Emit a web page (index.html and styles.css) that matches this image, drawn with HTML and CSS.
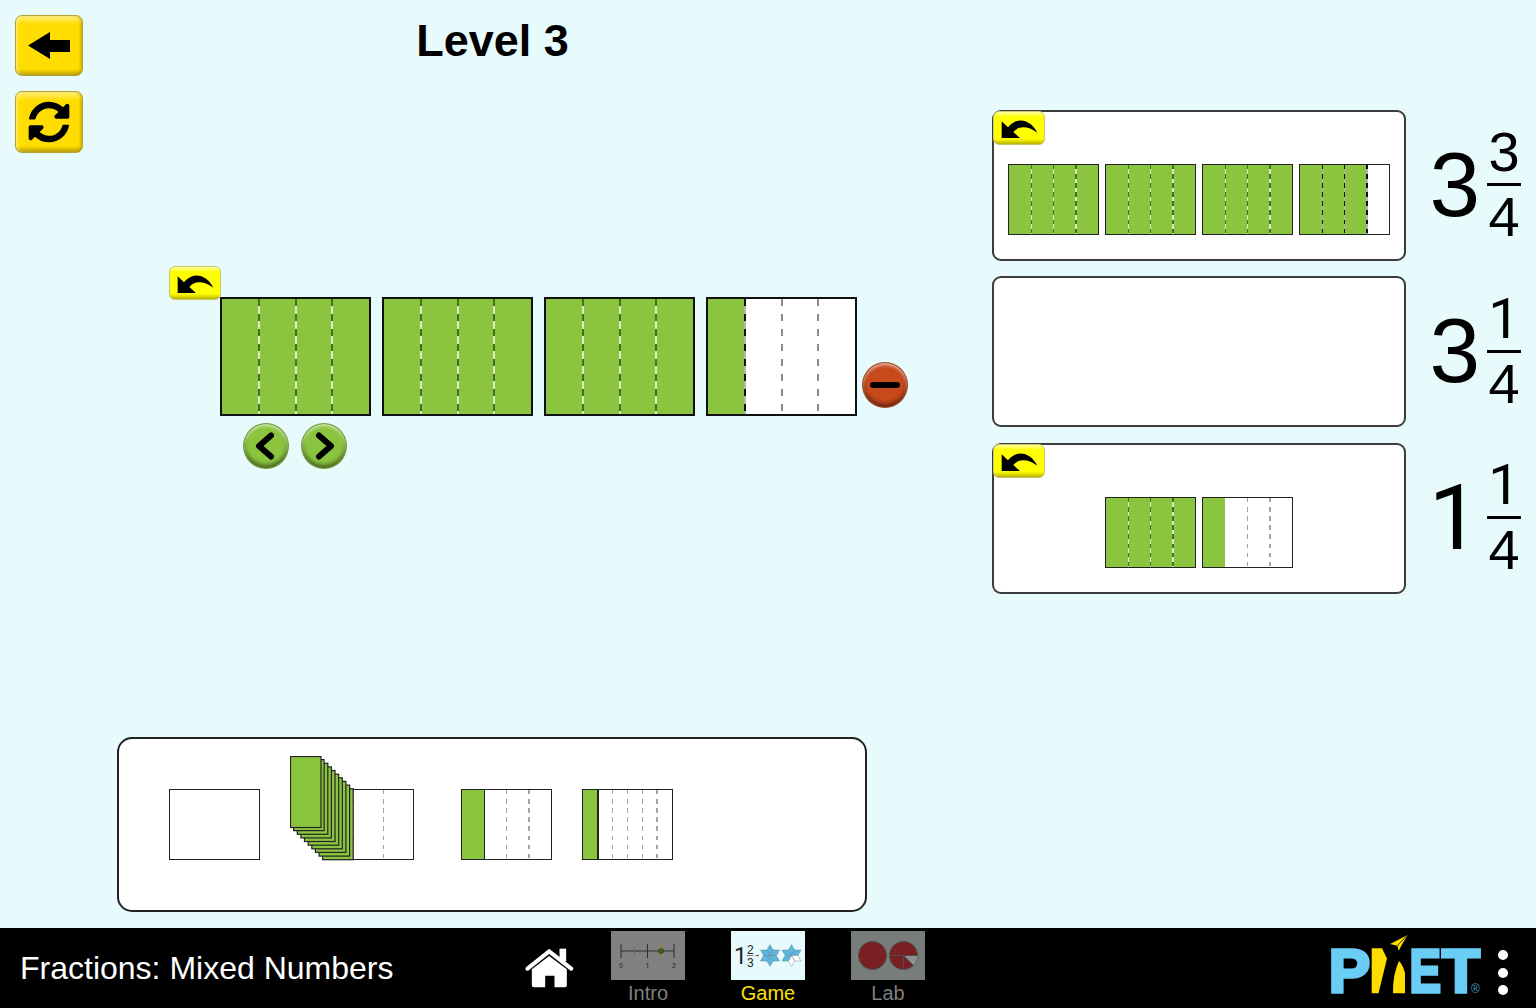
FILE: index.html
```html
<!DOCTYPE html>
<html lang="en">
  <head>
    <meta charset="UTF-8" />
    <meta name="viewport" content="width=device-width, initial-scale=1.0" />
    <title>Fractions: Mixed Numbers</title>
    <link rel="stylesheet" href="styles.css">
  </head>
  <body>
    <main class="sim">
      <!-- back + refresh -->
      <div class="tools">
        <button class="tool-btn tool-back">
          <svg width="42" height="27" viewBox="0 0 42 27"><path d="M0 13.5 22 0V8H42V20H22V27Z" /></svg>
        </button>
        <button class="tool-btn tool-refresh">
          <svg width="42" height="42" viewBox="0 0 512 512"><path d="M370.72 133.28C339.458 104.008 298.888 87.962 255.848 88c-77.458.068-144.328 53.178-162.791 126.85-1.344 5.363-6.122 9.15-11.651 9.15H24.103c-7.498 0-13.194-6.807-11.807-14.176C33.933 94.924 134.813 8 256 8c66.448 0 126.791 26.136 171.315 68.685L463.03 40.97C478.149 25.851 504 36.559 504 57.941V192c0 13.255-10.745 24-24 24H345.941c-21.382 0-32.09-25.851-16.971-40.971l41.75-41.749zM32 296h134.059c21.382 0 32.09 25.851 16.971 40.971l-41.75 41.75c31.262 29.273 71.835 45.319 114.876 45.28 77.418-.07 144.315-53.144 162.787-126.849 1.344-5.363 6.122-9.15 11.651-9.15h57.304c7.498 0 13.194 6.807 11.807 14.176C478.067 417.076 377.187 504 256 504c-66.448 0-126.791-26.136-171.315-68.685L48.97 471.03C33.851 486.149 8 475.441 8 454.059V320c0-13.255 10.745-24 24-24z" /></svg>
        </button>
      </div>

      <!-- title, builder, tray -->
      <div class="work">
        <h1 class="level-title">Level 3</h1>

        <div class="builder">
          <button class="undo-btn builder-undo">
            <svg width="51" height="34" viewBox="0 0 153 102"><path d="M23 28V78H78L58 60C72 42 100 40 130 62 112 24 70 10 42 46Z" /></svg>
          </button>
          <div class="builder-row">
            <div class="bar"><span class="cell on"></span><span class="cell on"></span><span class="cell on"></span><span class="cell on"></span></div>
            <div class="bar"><span class="cell on"></span><span class="cell on"></span><span class="cell on"></span><span class="cell on"></span></div>
            <div class="bar"><span class="cell on"></span><span class="cell on"></span><span class="cell on"></span><span class="cell on"></span></div>
            <div class="bar"><span class="cell on"></span><span class="cell mark"></span><span class="cell"></span><span class="cell"></span></div>
            <button class="round-btn round-minus">
              <svg width="46" height="46" viewBox="0 0 46 46"><line x1="11" y1="23" x2="35" y2="23" /></svg>
            </button>
          </div>
          <div class="builder-nav">
            <button class="round-btn round-green">
              <svg width="46" height="46" viewBox="0 0 46 46"><polyline points="28,12.5 16,23 28,33.5" /></svg>
            </button>
            <button class="round-btn round-green">
              <svg width="46" height="46" viewBox="0 0 46 46"><polyline points="18,12.5 30,23 18,33.5" /></svg>
            </button>
          </div>
        </div>

        <div class="tray">
          <div class="bar mini tray-first"><span class="cell"></span></div>
          <div class="bar mini tray-stack">
            <span class="cell"></span><span class="cell"></span><span class="cell"></span>
            <svg class="stack" width="64" height="105" viewBox="0 0 64 105">
              <rect x="32.7" y="32.7" width="30.5" height="71" />
              <rect x="29.1" y="29.1" width="30.5" height="71" />
              <rect x="25.4" y="25.4" width="30.5" height="71" />
              <rect x="21.8" y="21.8" width="30.5" height="71" />
              <rect x="18.2" y="18.2" width="30.5" height="71" />
              <rect x="14.5" y="14.5" width="30.5" height="71" />
              <rect x="10.9" y="10.9" width="30.5" height="71" />
              <rect x="7.3" y="7.3" width="30.5" height="71" />
              <rect x="3.6" y="3.6" width="30.5" height="71" />
              <rect x="0.5" y="0.5" width="30.5" height="71" />
            </svg>
          </div>
          <div class="bar mini tray-quarters"><span class="cell on"></span><span class="cell solid"></span><span class="cell"></span><span class="cell"></span></div>
          <div class="bar mini tray-sixths"><span class="cell on"></span><span class="cell solid"></span><span class="cell"></span><span class="cell"></span><span class="cell"></span><span class="cell"></span></div>
        </div>
      </div>

      <!-- target cards -->
      <div class="targets">
        <div class="target">
          <div class="card">
            <button class="undo-btn card-undo">
              <svg width="51" height="34" viewBox="0 0 153 102"><path d="M23 28V78H78L58 60C72 42 100 40 130 62 112 24 70 10 42 46Z" /></svg>
            </button>
            <div class="bar mini"><span class="cell on"></span><span class="cell on"></span><span class="cell on"></span><span class="cell on"></span></div>
            <div class="bar mini"><span class="cell on"></span><span class="cell on"></span><span class="cell on"></span><span class="cell on"></span></div>
            <div class="bar mini"><span class="cell on"></span><span class="cell on"></span><span class="cell on"></span><span class="cell on"></span></div>
            <div class="bar mini"><span class="cell on"></span><span class="cell on mark"></span><span class="cell on mark"></span><span class="cell mark"></span></div>
          </div>
          <div class="mixed"><span class="whole">3</span><span class="frac"><span>3</span><span class="frac-den">4</span></span></div>
        </div>
        <div class="target">
          <div class="card"></div>
          <div class="mixed"><span class="whole">3</span><span class="frac"><span class="one">1</span><span class="frac-den">4</span></span></div>
        </div>
        <div class="target">
          <div class="card">
            <button class="undo-btn card-undo">
              <svg width="51" height="34" viewBox="0 0 153 102"><path d="M23 28V78H78L58 60C72 42 100 40 130 62 112 24 70 10 42 46Z" /></svg>
            </button>
            <div class="bar mini"><span class="cell on"></span><span class="cell on"></span><span class="cell on"></span><span class="cell on"></span></div>
            <div class="bar mini"><span class="cell on"></span><span class="cell no-line"></span><span class="cell"></span><span class="cell"></span></div>
          </div>
          <div class="mixed"><span class="whole one">1</span><span class="frac"><span class="one">1</span><span class="frac-den">4</span></span></div>
        </div>
      </div>
    </main>

    <footer class="navbar">
      <div class="nav-title">Fractions: Mixed Numbers</div>
      <svg class="nav-home" width="49" height="40" viewBox="45 60 146 120">
        <rect x="148" y="62" width="20" height="38" />
        <path d="M65 124 117 84 170 124V172Q170 178 164 178H133V143H105V178H71Q65 178 65 172Z" />
        <polyline points="52,122 117,70 183,122" />
      </svg>
      <div class="tabs">
        <div class="tab">
          <svg class="tab-icon" width="74" height="49" viewBox="0 0 74 49">
            <rect width="74" height="49" fill="#808080" />
            <path d="M10 20H63M10 13V27M36.5 13V27M63 13V27" stroke="#2e2e2e" stroke-width="1" fill="none" />
            <path d="M23.5 16V24" stroke="#6a6a6a" stroke-width="1" />
            <path d="M50 14V26" stroke="#8f8a2a" stroke-width="2" />
            <circle cx="50" cy="20" r="2.6" fill="#3f6318" stroke="#2e2e2e" stroke-width=".6" />
            <text class="tick-label" x="10" y="37">0</text>
            <text class="tick-label one" x="36.5" y="37">1</text>
            <text class="tick-label" x="63" y="37">2</text>
          </svg>
          <span class="tab-label">Intro</span>
        </div>
        <div class="tab tab-active">
          <svg class="tab-icon" width="74" height="49" viewBox="0 0 74 49">
            <defs>
              <polygon id="rhomb" points="0,0 -3.18,-5.5 0,-11 3.18,-5.5" stroke="#5f7f8f" stroke-width=".4" />
            </defs>
            <rect width="74" height="49" fill="#e7fbfc" />
            <text class="icon-whole one" x="3" y="33">1</text>
            <text class="icon-frac" x="16" y="22.5">2</text>
            <path d="M15.5 24.5H22.5" stroke="#777" stroke-width="1" />
            <text class="icon-frac" x="16" y="35.5">3</text>
            <path d="M24.5 24.5H28" stroke="#777" stroke-width="1.5" />
            <g fill="#5db7de" transform="translate(39 24.5)">
              <use href="#rhomb" /><use href="#rhomb" transform="rotate(60)" /><use href="#rhomb" transform="rotate(120)" />
              <use href="#rhomb" transform="rotate(180)" /><use href="#rhomb" transform="rotate(240)" /><use href="#rhomb" transform="rotate(300)" />
            </g>
            <g fill="#5db7de" transform="translate(60.5 24.5)">
              <use href="#rhomb" /><use href="#rhomb" transform="rotate(60)" />
              <use href="#rhomb" transform="rotate(120)" fill="#fff" /><use href="#rhomb" transform="rotate(180)" fill="#fff" />
              <use href="#rhomb" transform="rotate(240)" /><use href="#rhomb" transform="rotate(300)" />
            </g>
          </svg>
          <span class="tab-label">Game</span>
        </div>
        <div class="tab">
          <svg class="tab-icon" width="74" height="49" viewBox="0 0 74 49">
            <rect width="74" height="49" fill="#767d7b" />
            <circle cx="21.5" cy="24.5" r="14" fill="#7b2022" stroke="#4d4d4d" />
            <circle cx="52.5" cy="24.5" r="14" fill="#7b2022" stroke="#4d4d4d" />
            <path d="M52.5 24.5H66.5A14 14 0 0 1 62.4 34.4Z" fill="#8f8f8f" />
            <path d="M38.5 24.5H66.5M52.5 24.5V38.5M52.5 24.5 62.4 34.4" stroke="#4d4d4d" fill="none" />
          </svg>
          <span class="tab-label">Lab</span>
        </div>
      </div>
      <svg class="phet-logo" width="154" height="72" viewBox="-3 0 154 72">
        <text class="phet-letter" x="-2.3" y="57">P</text>
        <text class="phet-letter" x="78.5" y="57" textLength="31.5" lengthAdjust="spacingAndGlyphs">E</text>
        <text class="phet-letter" x="111" y="57">T</text>
        <path class="phet-h" d="M40.7 13.3H51L56 23.5 47.5 58.3H40.7ZM68 26Q72 30 74 38V58.3H62Q61.5 40 68 26Z" />
        <path class="phet-h" d="M76.7 0 59 9 66.3 10.7 67.7 15.7 70.7 10Z" />
        <path class="phet-fold" d="M76.7 0 66.3 10.7" />
        <text class="phet-reg" x="140" y="58">®</text>
      </svg>
      <div class="nav-dots"><span></span><span></span><span></span></div>
    </footer>
  </body>
</html>
```

FILE: styles.css
```css
* {
  box-sizing: border-box;
}

body {
  margin: 0;
  width: 1536px;
  height: 1008px;
  overflow: hidden;
  font-family: "Liberation Sans", Arial, sans-serif;
  background-color: #e7fbfc;
}

button {
  padding: 0;
  font: inherit;
  cursor: pointer;
}

svg {
  display: block;
}

/* the footless 1 */
.one {
  font-family: Roboto, "Liberation Sans", sans-serif;
}

.sim {
  display: grid;
  grid-template-columns: 118px 874px 1fr;
  height: 928px;
}

/* yellow tools */
.tools {
  display: flex;
  flex-direction: column;
  gap: 15px;
  padding: 15px 0 0 15px;
}
.tool-btn {
  display: flex;
  align-items: center;
  justify-content: center;
  width: 68px;
  height: 61px;
  background: linear-gradient(to bottom, #fff07a 0, #ffdd00 14%, #ffdd00 90%, #b9a000 100%);
  border: 1px solid #b5a02c;
  border-radius: 7px;
  box-shadow: inset 2px 0 2px rgba(255, 255, 255, 0.35), inset -2px 0 2px rgba(120, 100, 0, 0.3);
}
.tool-refresh {
  height: 62px;
}

.work {
  display: flex;
  flex-direction: column;
  padding-bottom: 16px;
}

.level-title {
  width: 749px;
  margin: 0;
  padding-top: 15px;
  font-size: 45px;
  line-height: 52px;
  font-weight: bold;
  text-align: center;
  color: #000;
}

/* big fraction builder */
.builder {
  position: relative;
  margin: 230px 0 0 102px;
}
.builder-row {
  display: flex;
  gap: 11px;
}
.builder-nav {
  display: flex;
  gap: 12px;
  margin: 7px 0 0 23px;
}
.builder-undo {
  position: absolute;
  left: -51px;
  top: -31px;
}

.undo-btn {
  width: 52px;
  height: 34px;
  background: linear-gradient(to bottom, #ffff99 0, #ffff00 16%, #ffff00 84%, #b8b300 100%);
  border: 1px solid #c9c66a;
  border-radius: 6px;
}

.round-btn {
  flex: none;
  width: 46px;
  height: 46px;
  border-radius: 50%;
  border: 1px solid rgba(70, 70, 40, 0.35);
  box-shadow: inset 0 2px 3px rgba(255, 255, 255, 0.6), inset 0 -3px 4px rgba(0, 0, 0, 0.5);
}
.round-btn svg {
  margin: -1px;
}
.round-green {
  background-color: #8bc53f;
}
.round-green polyline {
  fill: none;
  stroke: #000;
  stroke-width: 6;
  stroke-linecap: round;
  stroke-linejoin: round;
}
.round-minus {
  margin: 65px 0 0 -6px;
  background-color: #c8491c;
}
.round-minus line {
  stroke: #000;
  stroke-width: 6;
  stroke-linecap: round;
}

/* fraction bars */
.bar {
  flex: none;
  display: flex;
  width: 151px;
  height: 119px;
  background-color: #fff;
  border: 2px solid #111;
}
.cell {
  --dash: 7px;
  --period: 15px;
  --line: 2px;
  --dark: #8a8a8a;
  --light: transparent;
  position: relative;
  flex: 1;
}
.cell:not(:first-child)::before {
  content: "";
  position: absolute;
  top: 0;
  bottom: 0;
  left: calc(var(--line) / -2);
  width: var(--line);
  background-image: repeating-linear-gradient(to bottom, var(--dark) 0, var(--dark) var(--dash), var(--light) var(--dash), var(--light) var(--period));
}
.cell.no-line::before {
  display: none;
}
.mini .cell {
  --dash: 4.5px;
  --period: 9.1px;
  --line: 1.5px;
  --dark: #a3a3a3;
}
.cell.on,
.mini .cell.on {
  --dark: #47701c;
  --light: #d9eec0;
  background-color: #8bc53f;
}
.cell.mark,
.mini .cell.mark {
  --dark: #111;
  --light: #b4b4b4;
}
.cell.solid,
.mini .cell.solid {
  --dark: #222;
  --light: #222;
}

.bar.mini {
  width: 91px;
  height: 71px;
  border-width: 1.5px;
  border-color: #222;
}

/* piece tray */
.tray {
  display: flex;
  align-items: center;
  width: 750px;
  height: 175px;
  margin: auto 0 0 -1px;
  background-color: #fff;
  border: 2px solid #222;
  border-radius: 15px;
}
.tray-first {
  margin-left: 50px;
}
.tray-stack {
  position: relative;
  margin-left: 63px;
}
.stack {
  position: absolute;
  left: -34px;
  top: -34px;
}
.stack rect {
  fill: #8bc53f;
  stroke: #222;
  stroke-width: 1.2;
}
.tray-quarters {
  margin-left: 47px;
}
.tray-sixths {
  margin-left: 30px;
}

/* target cards */
.targets {
  display: flex;
  flex-direction: column;
  gap: 15.5px;
  padding-top: 109.5px;
}
.target {
  display: flex;
  align-items: center;
  height: 151px;
}
.card {
  position: relative;
  display: flex;
  justify-content: center;
  gap: 6px;
  flex: none;
  width: 414px;
  height: 151px;
  padding-top: 52px;
  background-color: #fff;
  border: 2px solid #3c3c3c;
  border-radius: 9px;
}
.card-undo {
  position: absolute;
  left: -1px;
  top: -1px;
}

.mixed {
  display: flex;
  align-items: center;
  color: #000;
}
.whole {
  width: 74px;
  font-size: 91px;
  line-height: 92px;
  text-align: right;
  margin-top: -1px;
}
.frac {
  display: flex;
  flex-direction: column;
  align-items: center;
  width: 34px;
  margin-left: 7px;
  font-size: 56px;
  line-height: 62px;
  margin-top: -1px;
}
.frac-den {
  width: 100%;
  text-align: center;
  border-top: 3px solid #000;
}

/* bottom bar */
.navbar {
  display: flex;
  align-items: flex-start;
  height: 80px;
  padding-left: 20px;
  background-color: #000;
  color: #fff;
}
.nav-title {
  flex: none;
  width: 505px;
  margin-top: 20px;
  font-size: 32px;
  line-height: 40px;
  white-space: nowrap;
}
.nav-home {
  flex: none;
  margin-top: 20px;
}
.nav-home rect,
.nav-home path {
  fill: #fff;
}
.nav-home polyline {
  fill: none;
  stroke: #fff;
  stroke-width: 12;
  stroke-linecap: round;
  stroke-linejoin: miter;
}

.tabs {
  display: flex;
  gap: 46px;
  margin-left: 37px;
  padding-top: 3px;
}
.tab {
  display: flex;
  flex-direction: column;
  align-items: center;
  width: 74px;
}
.tab-label {
  margin-top: 1px;
  font-size: 20px;
  line-height: 24px;
  color: #7f7f7f;
}
.tab-active .tab-label {
  color: #ffe000;
}
.tick-label {
  font-size: 7px;
  text-anchor: middle;
  fill: #222;
}
.icon-whole {
  font-size: 23px;
  fill: #222;
}
.icon-frac {
  font-size: 12px;
  fill: #222;
}

.phet-logo {
  flex: none;
  margin: 7px 0 0 auto;
}
.phet-letter {
  font-size: 62px;
  font-weight: bold;
  fill: #6acdf5;
  stroke: #6acdf5;
  stroke-width: 3.5;
}
.phet-h {
  fill: #ffdd00;
}
.phet-fold {
  fill: none;
  stroke: #000;
  stroke-width: 0.8;
}
.phet-reg {
  font-size: 12px;
  fill: #3b9cc4;
}
.nav-dots {
  display: flex;
  flex-direction: column;
  gap: 7.5px;
  margin: 22px 28px 0 16px;
}
.nav-dots span {
  width: 10px;
  height: 10px;
  background-color: #fff;
  border-radius: 50%;
}
```
